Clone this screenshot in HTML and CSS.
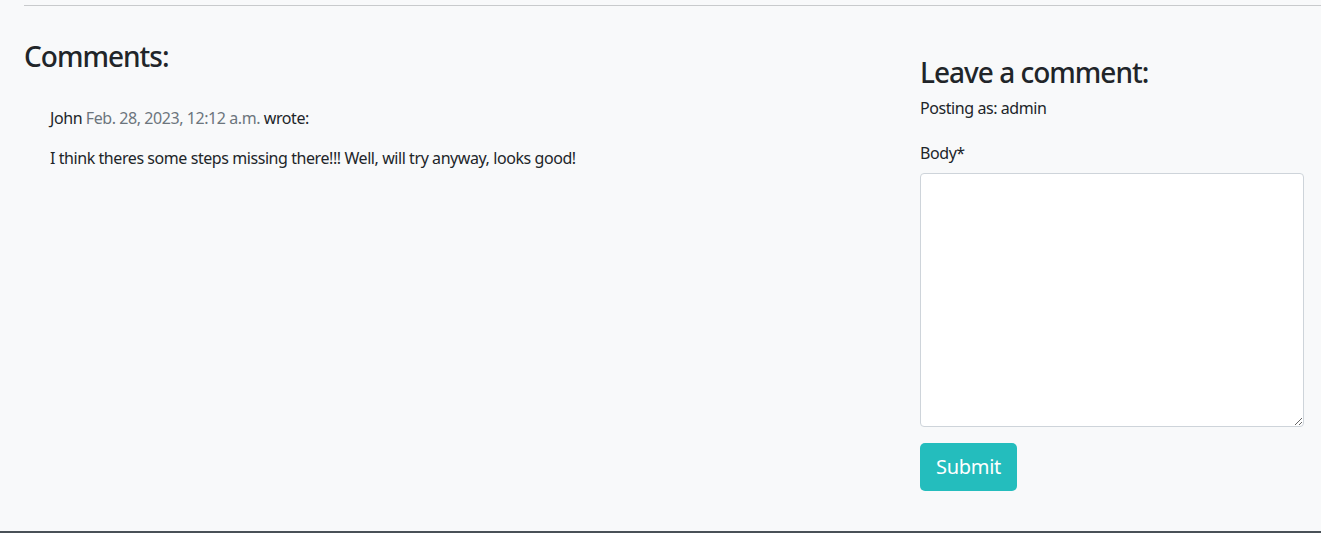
FILE: index.html
```html
<!DOCTYPE html>
<html lang="en">
<head>
<meta charset="utf-8">
<title>Comments</title>
<link rel="stylesheet" href="styles.css">
</head>
<body>
<div class="page">
  <hr class="divider">
  <div class="row">
    <section class="comments">
      <h3 class="heading">Comments:</h3>
      <div class="comment">
        <p class="meta">John <span class="date">Feb. 28, 2023, 12:12 a.m.</span> wrote:</p>
        <p class="body">I think theres some steps missing there!!! Well, will try anyway, looks good!</p>
      </div>
    </section>
    <section class="form-col">
      <h3 class="heading">Leave a comment:</h3>
      <p class="posting">Posting as: admin</p>
      <form class="form">
        <label class="label" for="body">Body*</label>
        <textarea id="body" class="textarea"></textarea>
        <button type="button" class="btn">Submit</button>
      </form>
    </section>
  </div>
</div>
<footer class="footer"></footer>
</body>
</html>
```

FILE: styles.css
```css
html, body {
  margin: 0;
  padding: 0;
}
body {
  background: #f8f9fa;
  color: #212529;
  font-family: "Noto Sans", "Open Sans", sans-serif;
  font-size: 16px;
  letter-spacing: -0.43px;
  line-height: 1.5;
  height: 533px;
  overflow: hidden;
  display: flex;
  flex-direction: column;
}
.page {
  flex: 1;
  padding-left: 24px;
}
.divider {
  margin: 5px 0 0 0;
  border: 0;
  border-top: 1px solid #c8cacc;
}
.row {
  display: flex;
  padding-right: 17px;
}
.comments {
  flex: 1;
  padding-top: 34px;
}
.heading {
  margin: 0;
  font-size: 28px;
  font-weight: 500;
  line-height: 1.2;
  letter-spacing: -1px;
}
.comment {
  padding: 32px 26px 0;
}
.comment p {
  margin: 0;
}
.meta {
  margin-bottom: 16px !important;
}
.date {
  color: #6c757d;
}
.form-col {
  width: 384px;
  padding-top: 50px;
}
.posting {
  margin: 6px 0 0;
}
.form {
  display: flex;
  flex-direction: column;
  align-items: flex-start;
  margin-top: 21px;
}
.label {
  margin-bottom: 8px;
}
.textarea {
  box-sizing: border-box;
  width: 384px;
  height: 254px;
  border: 1px solid #ced4da;
  border-radius: 4px;
  background: #fff;
  margin: 0;
}
.btn {
  margin-top: 16px;
  height: 48px;
  padding: 0 16px;
  background: #24bdbd;
  border: 0;
  border-radius: 5px;
  color: #fff;
  font-family: inherit;
  font-size: 20px;
  letter-spacing: -0.3px;
}
.footer {
  height: 2px;
  background: #495057;
}
```
